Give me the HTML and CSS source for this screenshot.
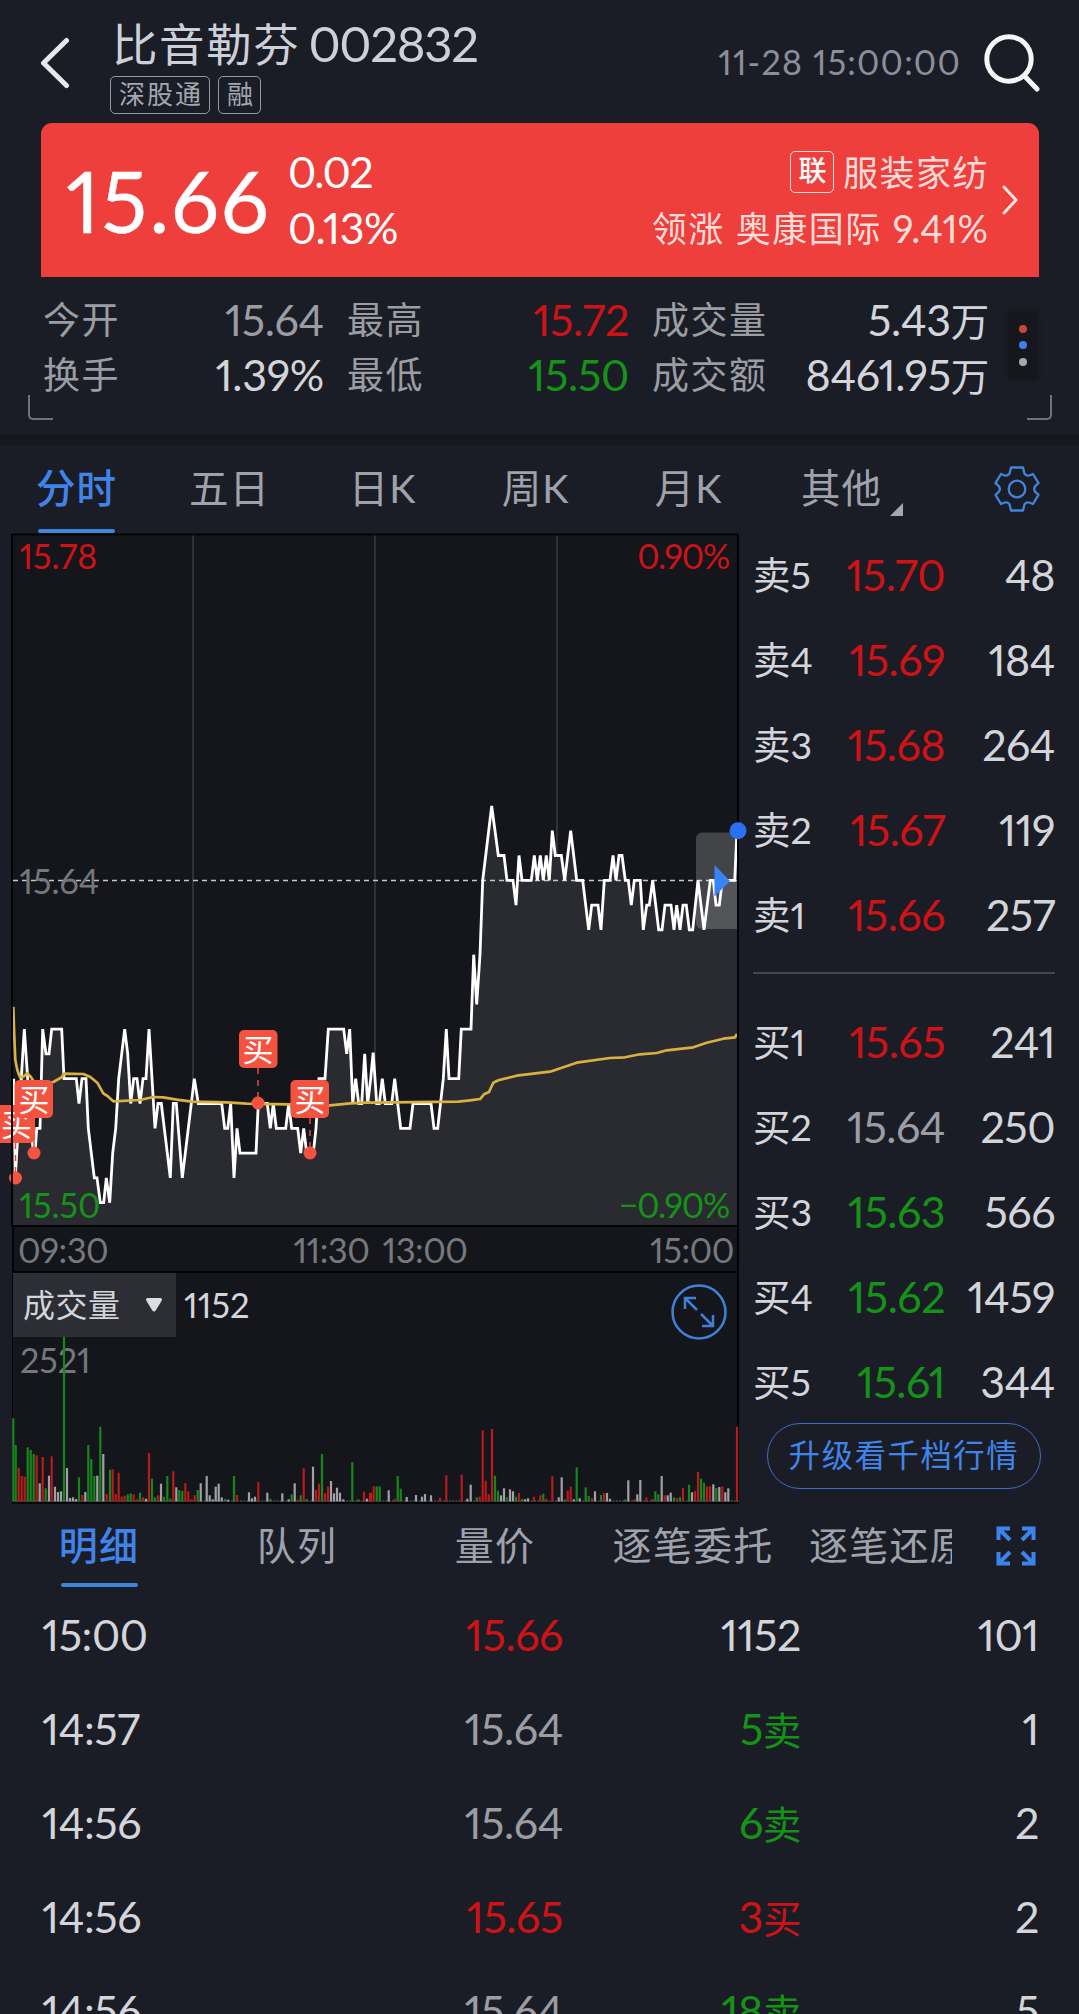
FILE: index.html
```html
<!DOCTYPE html>
<html lang="zh-CN">
<head>
<meta charset="utf-8">
<title>比音勒芬 002832</title>
<link rel="stylesheet" href="styles.css">
</head>
<body>
<header class="header">
  <svg class="back" width="32" height="54" viewBox="0 0 32 54"><path d="M26.500 4.500 3.500 27 26.500 49.500"/></svg>
  <div class="stock">
    <h1 class="stock-name"><span class="stock-title">比音勒芬</span><span class="stock-code">002832</span></h1>
    <div class="tags"><span class="tag">深股通</span><span class="tag">融</span></div>
  </div>
  <time class="clock">11-28 15:00:00</time>
  <svg class="search" width="56" height="58" viewBox="0 0 56 58"><circle cx="25" cy="25" r="22.200"/><path d="M40.500 42 53 55"/></svg>
</header>

<section class="quote">
  <div class="last">15.66</div>
  <div class="change"><span>0.02</span><span>0.13%</span></div>
  <div class="sector">
    <div class="sector-line"><span class="sector-tag">联</span><span class="sector-name">服装家纺</span></div>
    <div class="sector-line"><span>领涨</span><span>奥康国际</span><span class="sector-pct">9.41%</span></div>
  </div>
  <svg class="chev" width="18" height="32" viewBox="0 0 18 32"><path d="M3 3 15 16 3 29"/></svg>
</section>

<section class="stats">
  <div class="stats-grid">
    <span class="k">今开</span><span class="v flat">15.64</span><span class="k">最高</span><span class="v up">15.72</span><span class="k">成交量</span><span class="v">5.43<i>万</i></span>
    <span class="k">换手</span><span class="v">1.39%</span><span class="k">最低</span><span class="v down">15.50</span><span class="k">成交额</span><span class="v">8461.95<i>万</i></span>
  </div>
  <div class="dots"><b class="dot dot-red"></b><b class="dot dot-blue"></b><b class="dot dot-grey"></b></div>
  <div class="corner corner-left"></div>
  <div class="corner corner-right"></div>
</section>

<nav class="periods">
  <span class="period active">分时</span><span class="period">五日</span><span class="period">日K</span><span class="period">周K</span><span class="period">月K</span><span class="period more">其他</span>
  <svg class="gear" width="48" height="48" viewBox="-24 -24 48 48"><path d="M-6 -21.500H6L7.500 -15.200Q9.500 -12.800 12.300 -13.500L16 -15 21.500 -5.800 18.500 -3.200Q15.800 0 18.500 3.200L21.500 5.800 16 15 12.300 13.500Q9.500 12.800 7.500 15.200L6 21.500H-6L-7.500 15.200Q-9.500 12.800 -12.300 13.500L-16 15 -21.500 5.800 -18.500 3.200Q-15.800 0 -18.500 -3.200L-21.500 -5.800 -16 -15 -12.300 -13.500Q-9.500 -12.800 -7.500 -15.200Z"/><circle r="8.300"/></svg>
</nav>

<main class="main">
  <div class="charts">
    <svg class="price" width="748" height="694" viewBox="0 533 748 694">
      <rect class="panel" x="12" y="534" width="726" height="692"/>
      <path class="grid" d="M193 535V1225M375 535V1225M557 535V1225"/>
      <polygon class="area" id="area"/>
      <path class="zero" d="M13 880.500H738"/>
      <polyline class="line" id="line"/>
      <polyline class="avg" id="avg"/>
      <path class="window" d="M738 832.500H702a6 6 0 0 0-6 6V923a6 6 0 0 0 6 6H738Z"/>
      <path class="play" d="M714.500 865 730 881 714.500 896.500Z"/>
      <text class="axis up" x="19.500" y="569">15.78</text>
      <text class="axis up end" x="729" y="569">0.90%</text>
      <text class="axis grey" x="19.500" y="893.500">15.64</text>
      <text class="axis down" x="19.500" y="1218">15.50</text>
      <text class="axis down end" x="729" y="1218">−0.90%</text>
      <g class="trade">
        <path d="M15.500 1143V1175M34 1118V1150M258 1068V1100M310 1118V1150"/>
        <circle cx="15.500" cy="1178" r="6.500"/><rect x="-4" y="1105" width="39" height="38" rx="5"/><text x="16.500" y="1135.500">买</text>
        <circle cx="34" cy="1153" r="6.500"/><rect x="14.500" y="1080" width="38.500" height="38" rx="5"/><text x="34" y="1110.500">买</text>
        <circle cx="258" cy="1103" r="6.500"/><rect x="239" y="1030" width="38.500" height="38" rx="5"/><text x="258" y="1060.500">买</text>
        <circle cx="310" cy="1153" r="6.500"/><rect x="290.500" y="1080" width="38.500" height="38" rx="5"/><text x="310" y="1110.500">买</text>
      </g>
      <rect class="frame" x="12" y="534.500" width="726" height="691.500"/>
      <circle class="now" cx="738" cy="830.700" r="8.500"/>
    </svg>
    <div class="times"><span>09:30</span><span class="noon"><span>11:30</span><span>13:00</span></span><span>15:00</span></div>
    <div class="volume">
      <div class="volume-head">
        <div class="picker"><span>成交量</span><svg width="18" height="16" viewBox="0 0 18 16"><path d="M3 1H15Q18 1 16.500 4L11 13Q9 16 7 13L1.500 4Q0 1 3 1Z"/></svg></div>
        <span class="volume-now">1152</span>
        <svg class="expand" width="56" height="56" viewBox="-28 -28 56 56"><circle r="26.500"/><path d="M-2 -2-14 -14M-14 -3V-14H-3M2 2 14 14M14 3V14H3"/></svg>
      </div>
      <svg class="bars" width="724" height="165" viewBox="13 1337 724 165">
        <text class="axis grey" x="20" y="1373">2521</text>
        <g id="bars"></g>
      </svg>
    </div>
  </div>

  <aside class="book">
    <div class="level"><span class="side">卖5</span><span class="price-cell up">15.70</span><span class="qty">48</span></div>
    <div class="level"><span class="side">卖4</span><span class="price-cell up">15.69</span><span class="qty">184</span></div>
    <div class="level"><span class="side">卖3</span><span class="price-cell up">15.68</span><span class="qty">264</span></div>
    <div class="level"><span class="side">卖2</span><span class="price-cell up">15.67</span><span class="qty">119</span></div>
    <div class="level"><span class="side">卖1</span><span class="price-cell up">15.66</span><span class="qty">257</span></div>
    <hr class="divider">
    <div class="level"><span class="side">买1</span><span class="price-cell up">15.65</span><span class="qty">241</span></div>
    <div class="level"><span class="side">买2</span><span class="price-cell flat">15.64</span><span class="qty">250</span></div>
    <div class="level"><span class="side">买3</span><span class="price-cell down">15.63</span><span class="qty">566</span></div>
    <div class="level"><span class="side">买4</span><span class="price-cell down">15.62</span><span class="qty">1459</span></div>
    <div class="level"><span class="side">买5</span><span class="price-cell down">15.61</span><span class="qty">344</span></div>
    <div class="upgrade">升级看千档行情</div>
  </aside>
</main>

<nav class="details">
  <span class="detail active">明细</span><span class="detail">队列</span><span class="detail">量价</span><span class="detail">逐笔委托</span><span class="detail cut">逐笔还原</span>
  <svg class="full" width="40" height="40" viewBox="0 0 40 40"><path d="M14 2.500H2.500V14M2.500 2.500 14 14M26 2.500H37.500V14M37.500 2.500 26 14M14 37.500H2.500V26M2.500 37.500 14 26M26 37.500H37.500V26M37.500 37.500 26 26"/></svg>
</nav>

<section class="ticks">
  <div class="tick"><span>15:00</span><span class="up">15.66</span><span>1152</span><span>101</span></div>
  <div class="tick"><span>14:57</span><span class="flat">15.64</span><span class="down">5<i>卖</i></span><span>1</span></div>
  <div class="tick"><span>14:56</span><span class="flat">15.64</span><span class="down">6<i>卖</i></span><span>2</span></div>
  <div class="tick"><span>14:56</span><span class="up">15.65</span><span class="up">3<i>买</i></span><span>2</span></div>
  <div class="tick"><span>14:56</span><span class="flat">15.64</span><span class="down">18<i>卖</i></span><span>5</span></div>
</section>
<script src="chart.js"></script>
</body>
</html>
```

FILE: styles.css
```css
* { box-sizing: border-box; }
body {
  margin: 0;
  width: 1079px;
  height: 2014px;
  overflow: hidden;
  background: #1b1d26;
  color: #d3d5da;
  font-family: Lato, "Noto Sans CJK SC", sans-serif;
  font-variant-numeric: proportional-nums;
  font-size: 43px;
}
svg { display: block; fill: none; flex: none; }
i { font-style: normal; font-size: 38.500px; }
.up { color: #cf1216; fill: #cf1216; }
.down { color: #149318; fill: #149318; }
.flat { color: #9b9da3; }

.header { height: 123px; display: flex; padding-left: 40px; }
.back { margin-top: 36px; stroke: #e6e9e9; stroke-width: 5; stroke-linecap: round; stroke-linejoin: round; }
.stock { margin-left: 38px; width: 400px; }
.stock-name { margin: 11px 0 0; padding-left: 2px; height: 65px; line-height: 64px; display: flex; align-items: baseline; font-weight: 400; color: #cdd0d8; white-space: nowrap; }
.stock-title { font-size: 45.500px; letter-spacing: 1.600px; }
.stock-code { margin-left: 8px; font-size: 49px; letter-spacing: -1.300px; }
.tags { display: flex; gap: 8px; }
.tag { height: 38px; line-height: 34px; padding: 0 6px 0 8px; border: 1.500px solid #9599a3; border-radius: 5px; font-size: 26px; letter-spacing: 2px; color: #a3a7b0; }
.tag + .tag { padding-right: 5px; }
.clock { margin-left: auto; line-height: 124px; font-size: 34px; letter-spacing: 1.200px; color: #8b8f9c; }
.search { margin: 34px 39px 0 23px; stroke: #f4f6f8; stroke-width: 5; stroke-linecap: round; }

.quote { height: 154px; margin: 0 40px 0 41px; padding: 0 20px 0 25px; display: flex; align-items: center; border-radius: 11px 11px 0 0; background: #ef3f3d; color: #fff; }
.last { width: 222px; font-size: 85px; line-height: 154px; letter-spacing: 1.700px; -webkit-text-stroke: .300px #fff; }
.change { display: flex; flex-direction: column; line-height: 56px; letter-spacing: -.500px; }
.change :first-child { letter-spacing: -1.600px; }
.sector { margin-left: auto; color: #ffdcd8; font-size: 35px; display: flex; flex-direction: column; align-items: flex-end; }
.sector-line { height: 56px; display: flex; align-items: center; gap: 11px; letter-spacing: 1.500px; line-height: 56px; }
.sector-tag { width: 44px; height: 42px; margin-right: -2px; padding-left: 1px; border: 1.500px solid #ffdcd8; border-radius: 5px; font-size: 28px; line-height: 37px; text-align: center; letter-spacing: 0; font-weight: 500; color: #fff; }
.sector-pct { font-size: 38px; letter-spacing: 0; }
.sector-name { margin-right: -1px; }
.chev { margin-left: 13px; stroke: #ffe6e3; stroke-width: 3; stroke-linecap: round; stroke-linejoin: round; }

.stats { position: relative; height: 168px; padding: 15px 40px 0 43px; display: flex; border-bottom: 11px solid #14171b; }
.stats-grid { display: grid; grid-template-columns: 109px 172px 23px 110px 172px 23px 150px 187px; grid-auto-rows: 55px; line-height: 55px; width: 946px; }
.stats-grid .k:nth-child(6n+3) { grid-column: 4; }
.stats-grid .k:nth-child(6n+5) { grid-column: 7; }
.k { color: #9b9da3; font-size: 37px; letter-spacing: 1.500px; white-space: nowrap; }
.v { text-align: right; white-space: nowrap; letter-spacing: -.300px; }
.dots { width: 30px; height: 68px; margin: 19px 1px 0 auto; display: flex; flex-direction: column; align-items: center; justify-content: center; gap: 8.500px; background: #15171c; box-shadow: 0 0 4px #15171c; }
.dot { width: 8px; height: 8px; border-radius: 50%; }
.dot-red { background: #c8453a; }
.dot-blue { background: #3f80e8; }
.dot-grey { background: #a6a8ae; }
.corner { position: absolute; top: 118px; width: 25px; height: 25px; border: 0 solid #70737c; border-bottom-width: 2.500px; }
.corner-left { left: 28px; border-left-width: 2.500px; border-bottom-left-radius: 5px; }
.corner-right { right: 27px; border-right-width: 2.500px; border-bottom-right-radius: 5px; }

.periods { height: 88px; display: flex; }
.period { width: 153px; display: flex; justify-content: center; line-height: 86px; font-size: 39.500px; letter-spacing: 1px; color: #9fa2ab; }
.active { color: #4084ea; font-weight: 500; }
.period.active, .detail.active { position: relative; }
.period.active::after, .detail.active::after { content: ""; position: absolute; bottom: 0; width: 77px; height: 4.500px; border-radius: 2px; background: #4084dc; }
.more { position: relative; }
.more::after { content: ""; position: absolute; left: 125px; top: 58px; border-left: 13px solid transparent; border-bottom: 13px solid #a5a7ad; }
.gear { margin: 20px 0 0 75px; stroke: #4084dc; stroke-width: 2.300; stroke-linejoin: round; }

.main { height: 971px; display: flex; }
.charts { width: 748px; }
.price { overflow: hidden; }
.panel { fill: #14161b; }
.frame { stroke: #030407; stroke-width: 2; }
.grid { stroke: #303238; stroke-width: 2; }
.area { fill: #2a2b30; }
.zero { stroke: #c5c6ca; stroke-width: 1.500; stroke-dasharray: 5 4; }
.line { stroke: #fff; stroke-width: 2.800; stroke-linejoin: miter; stroke-miterlimit: 2; }
.avg { stroke: #d8b141; stroke-width: 2.700; stroke-linejoin: round; }
.window { fill: rgba(255, 255, 255, .2); }
.play { fill: #3a83f5; }
.now { fill: #2971f2; }
.axis { font-size: 34px; }
.axis.grey { fill: #76777b; }
.end { text-anchor: end; letter-spacing: -1.200px; }
.trade path { stroke: #e04b3c; stroke-width: 1.500; stroke-dasharray: 6 6; }
.trade rect, .trade circle { fill: #f4533f; }
.trade text { fill: #fff; font-size: 31px; text-anchor: middle; }
.times { height: 46px; width: 727px; margin-left: 12px; padding: 0 3px 0 4px; display: grid; grid-template-columns: 1fr auto 1fr; line-height: 45px; font-size: 34.500px; letter-spacing: -.500px; color: #77787d; background: #14161b; border: 0 solid #030407; border-width: 0 2px 2px; }
.times > :last-child { text-align: right; }
.noon { display: flex; gap: 13px; margin-left: 9px; }
.volume { width: 727px; height: 231px; margin-left: 12px; background: #14161b; border: solid #030407; border-width: 0 2px 2px 1px; }
.volume-head { display: flex; height: 64px; }
.picker { width: 163px; padding: 0 13px 0 10px; display: flex; align-items: center; justify-content: space-between; background: #2d2e35; font-size: 32px; line-height: 60px; letter-spacing: .500px; }
.picker svg { fill: #dcdde0; }
.volume-now { margin-left: 8px; line-height: 64px; font-size: 34.500px; }
.expand { margin: 11px 10px 0 auto; stroke: #3f80d8; stroke-width: 2.500; }
.bars { overflow: visible; }
.r { fill: #b91a1c; }
.g { fill: #17861c; }
.w { fill: #9fa1a5; }

.book { width: 331px; padding: 0 24px 0 5px; margin-top: -1px; }
.level { height: 85px; display: grid; grid-template-columns: 70px 122px 1fr; line-height: 85px; letter-spacing: -.500px; }
.side { font-size: 37.500px; white-space: nowrap; letter-spacing: 0; }
.price-cell, .qty { text-align: right; }
.divider { height: 2px; margin: 15px 0 25px; border: 0; background: #44464d; }
.upgrade { width: 274px; height: 66px; margin: -1px 0 0 14px; border: 1.500px solid #3a6fc0; border-radius: 33px; text-align: center; line-height: 62px; font-size: 31.300px; letter-spacing: 1.600px; color: #4084ea; }

.details { height: 84px; display: flex; line-height: 82px; font-size: 39px; letter-spacing: 1.200px; color: #9fa2ab; border-bottom: 1px solid #181a21; }
.detail { width: 198px; display: flex; justify-content: center; white-space: nowrap; }
.detail.cut { width: 143px; margin-left: 17px; justify-content: flex-start; overflow: hidden; }
.full { margin: 22px 0 0 44px; stroke: #3b85ec; stroke-width: 4; }

.tick { height: 94px; line-height: 94px; padding-left: 42px; letter-spacing: -.400px; display: grid; grid-template-columns: 320px 201px 238px 238px; }
.tick span:nth-child(n+2) { text-align: right; }
```

FILE: chart.js
```js
// Coordinates of both sessions are stored in thirds of a pixel from the session origin.
const ORIGIN = { am: 0, pm: 370 };
const ZERO_Y = 880.3, STEP = 24.8; // y of the previous close, height of one cent

const price = {
  am: "41,-8 46,-12 50,-11 73,-6 83,-8 100,-11 105,-11 110,-10 120,-10 128,-6 138,-7 147,-7 155,-6 185,-6 192,-8 229,-8 237,-9 246,-8 258,-8 265,-10 283,-12 291,-12 301,-13 311,-13 319,-12 329,-13 338,-11 347,-10 356,-8 374,-6 383,-7 392,-9 401,-8 411,-8 420,-9 429,-8 438,-8 447,-6 456,-8 465,-10 474,-9 484,-9 511,-12 520,-9 529,-9 547,-12 574,-9 583,-8 595,-9 665,-9 674,-10 683,-10 692,-9 702,-12 711,-10 720,-11 768,-11 775,-9 802,-9 811,-10 820,-9 829,-10 857,-10 866,-9 875,-10 893,-10 902,-11 911,-10 920,-11 940,-11 948,-10 957,-8 975,-8 985,-6 1031,-6 1040,-7 1049,-6 1058,-9 1067,-8 1076,-9 1085,-9 1094,-7 1103,-9 1112,-8 1119,-7",
  pm: "20,-9 28,-9 37,-8 46,-9 65,-9 74,-8 83,-9 92,-10 120,-10 129,-9 183,-9 192,-10 203,-10 220,-8 229,-6 237,-8 266,-8 274,-6 303,-6 311,-3 320,-5 330,-3 338,0 347,1 365,3 385,1 402,1 411,0 429,0 438,-1 447,1 456,0 484,0 493,1 502,0 511,1 520,0 529,1 538,0 547,2 556,1 574,1 584,0 602,2 620,0 638,0 656,-2 665,-1 684,-1 693,-2 703,0 720,0 729,1 738,0 747,1 756,1 766,0 775,0 784,-1 793,0 811,0 820,-2 830,-1 838,-1 848,0 866,-2 876,-2 885,-1 903,-1 912,-2 920,-1 930,-2 939,-1 949,-1 958,-2 968,-2 984,0 1002,-2 1021,0 1030,0 1038,-1 1048,-1 1057,0 1094,0 1101,2"
};
// The two peaks around the midday break.
price.am += " 1135,-9";
price.pm = "10,-7 " + price.pm;

const average = {
  am: [960, "40,140 43,230 46,300 52,330 60,352 70,350 82,340 92,350 100,362 110,372 140,370 160,366 185,352 192,341 250,342 270,350 292,368 310,400 325,410 340,424 420,420 460,411 490,412 530,419 575,425 680,427 740,431 870,433 960,440 990,436 1050,430 1110,427"],
  pm: [780, "0,968 265,965 300,961 330,957 342,943 357,936 370,908 385,901 440,887 540,875 620,848 720,834 765,832 810,823 860,819 890,811 970,802 1010,788 1060,776 1095,772 1101,762"]
};

const volume = {
  am: "40,595,g 47,675,g 56,743,r 65,768,r 74,770,r 83,682,g 92,690,g 101,702,g 110,706,r 119,790,w 128,711,r 137,805,g 147,767,w 155,709,r 165,800,w 174,816,w 183,814,w 192,350,g 201,744,w 210,834,w 219,832,w 228,837,w 237,772,g 247,825,r 256,816,w 265,675,g 274,717,g 283,768,g 292,767,w 301,620,g 310,702,w 320,822,r 330,749,g 338,748,r 347,822,r 356,758,r 365,830,r 374,827,r 383,823,g 392,820,g 401,823,r 411,838,r 420,818,g 429,832,r 438,836,w 447,699,r 456,776,g 465,832,g 474,826,r 483,791,w 492,830,g 502,768,g 511,836,g 520,754,r 529,802,w 538,810,g 547,813,g 556,790,r 565,814,r 574,838,r 584,826,r 593,810,g 602,790,w 620,768,w 629,826,w 638,838,w 647,800,w 656,791,w 665,832,w 675,837,g 684,839,w 702,768,g 711,825,r 747,817,w 756,835,w 765,830,w 775,786,r 802,818,w 811,836,g 847,820,w 866,838,w 875,823,g 884,790,w 893,839,r 902,826,g 911,745,r 920,837,g 939,740,w 948,810,r 957,791,r 966,702,g 975,820,r 984,800,r 993,783,w 1002,820,w 1011,803,w 1020,818,w 1030,838,w 1057,727,g 1075,838,g 1092,815,r 1101,836,w 1110,818,r",
  pm: "3,818,r 11,799,r 20,799,g 29,799,g 56,811,w 74,836,r 83,768,g 92,806,g 110,831,w 138,825,w 156,830,w 165,822,w 183,826,w 210,833,r 229,766,r 275,764,r 292,836,w 302,794,w 320,832,g 329,830,r 338,631,r 347,782,r 356,823,r 366,627,r 375,767,g 384,812,g 393,826,w 402,805,w 411,832,g 420,808,w 429,814,w 438,830,g 447,819,r 456,837,g 465,838,w 474,835,w 492,830,r 511,826,r 520,821,g 529,836,r 547,769,r 566,832,w 575,772,w 584,838,g 593,812,r 602,800,r 611,838,w 620,742,g 629,835,w 647,802,g 656,828,g 666,834,r 675,814,w 693,825,g 702,820,r 711,819,w 720,836,w 766,838,g 775,781,w 793,838,r 802,823,w 811,780,w 829,832,r 847,837,r 856,814,g 865,823,g 875,768,w 884,826,r 893,826,w 902,818,w 912,832,g 921,834,r 930,832,g 939,804,r 957,794,g 966,817,w 975,813,r 984,756,r 993,776,g 1002,788,g 1011,799,r 1020,799,r 1030,793,w 1039,804,g 1048,801,w 1057,799,r 1066,817,w 1075,805,w 1101,620,r"
};

const parse = (text) => text.split(" ").map((p) => p.split(","));
const sessions = ["am", "pm"];

const line = sessions.flatMap((s) => parse(price[s])
  .map(([x, n]) => [ORIGIN[s] + x / 3, ZERO_Y - STEP * n]))
  .sort((a, b) => a[0] - b[0]);
const points = line.map(([x, y]) => `${x.toFixed(1)},${y.toFixed(1)}`).join(" ");
document.getElementById("line").setAttribute("points", points);
document.getElementById("area").setAttribute("points", `13,1225 ${points} 737,1225`);

document.getElementById("avg").setAttribute("points", sessions.flatMap((s) =>
  parse(average[s][1]).map(([x, y]) => `${(ORIGIN[s] + x / 3).toFixed(1)},${(average[s][0] + y / 3).toFixed(1)}`)
).join(" "));

const BASE = 1501.5;
let bars = "";
for (let i = 0; i < 240; i++) {
  bars += `<rect class="w" x="${(13 + i * 3.03).toFixed(1)}" y="${BASE - 1}" width="1.8" height="1" opacity=".6"/>`;
}
sessions.forEach((s) => parse(volume[s]).forEach(([x, y, c]) => {
  const top = 1220 + y / 3;
  bars += `<rect class="${c}" x="${(ORIGIN[s] + x / 3 - 1.1).toFixed(1)}" y="${top.toFixed(1)}" width="2.2" height="${(BASE - top).toFixed(1)}"/>`;
}));
document.getElementById("bars").innerHTML = bars;
```
